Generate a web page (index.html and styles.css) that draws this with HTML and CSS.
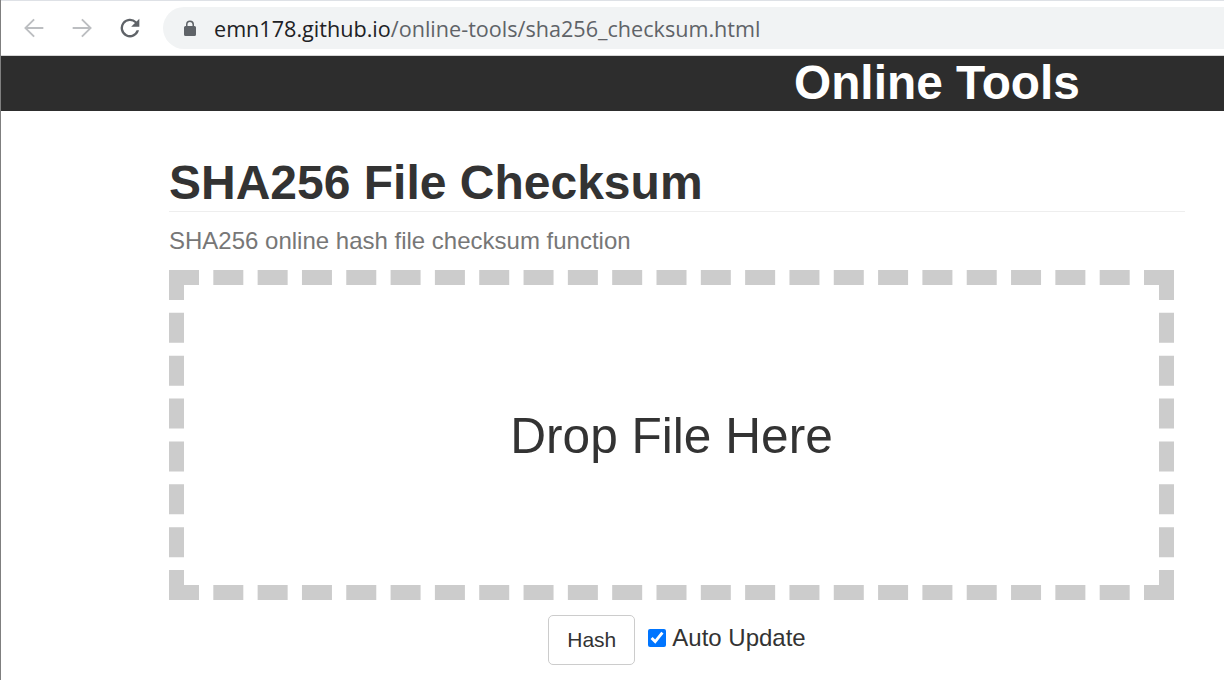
FILE: index.html
```html
<!DOCTYPE html>
<html lang="en">
<head>
<meta charset="utf-8">
<title>SHA256 File Checksum</title>
<link rel="stylesheet" href="styles.css">
</head>
<body>
<div class="toolbar">
  <svg class="nav-icon" viewBox="0 0 24 24" width="28" height="28"><path class="light" d="M20 11.2H6.6l6.1-6.1L11.5 4 3.5 12l8 8 1.2-1.1-6.1-6.1H20z"/></svg>
  <svg class="nav-icon" viewBox="0 0 24 24" width="28" height="28"><path class="light" d="M4 11.2h13.4l-6.1-6.1L12.5 4l8 8-8 8-1.2-1.1 6.1-6.1H4z"/></svg>
  <svg class="nav-icon" viewBox="0 0 24 24" width="28" height="28"><path class="dark" d="M17.65 6.35A8 8 0 1 0 19.73 14h-2.08a6 6 0 1 1-1.41-6.24L13 11h7V4z"/></svg>
  <div class="omnibox">
    <svg class="lock" viewBox="0 0 14 18" width="14" height="18"><path d="M11.5 7H11V5.500a4 4 0 0 0-8 0V7h-.5A1.500 1.500 0 0 0 1 8.500v7A1.500 1.500 0 0 0 2.500 17h9a1.500 1.500 0 0 0 1.500-1.500v-7A1.500 1.500 0 0 0 11.500 7zM4.500 5.500a2.500 2.500 0 0 1 5 0V7h-5z"/></svg>
    <span class="url"><span class="host">emn178.github.io</span>/online-tools/sha256_checksum.html</span>
  </div>
</div>
<header class="site-header"><span class="site-title">Online Tools</span></header>
<main class="content">
  <h1 class="page-title">SHA256 File Checksum</h1>
  <p class="subtitle">SHA256 online hash file checksum function</p>
  <div class="dropzone">Drop File Here</div>
  <div class="actions">
    <button class="hash-btn" type="button">Hash</button>
    <label class="auto"><input class="auto-check" type="checkbox" checked> Auto Update</label>
  </div>
</main>
</body>
</html>
```
FILE: styles.css
```css
* { box-sizing: border-box; }
html, body { margin: 0; height: 100%; overflow: hidden; }
body {
  background: #fff;
  border-left: 1px solid #7f7f7f;
  font-family: "Liberation Sans", Arial, sans-serif;
  color: #333;
}
.toolbar {
  height: 56px;
  border-top: 1px solid #dee1e6;
  border-bottom: 1px solid #d6d6d6;
  display: flex;
  align-items: center;
  padding: 0 0 0 19px;
  gap: 20px;
  background: #fff;
}
.nav-icon { flex: none; }
.light { fill: #bcbec1; }
.dark { fill: #5f6368; }
.omnibox {
  flex: 1;
  margin-left: -1px;
  height: 42px;
  margin-right: -40px;
  border-radius: 21px;
  background: #f1f3f4;
  display: flex;
  align-items: center;
  padding-left: 20px;
  gap: 17px;
}
.lock { fill: #5f6368; flex: none; }
.url { font-family: "Open Sans", sans-serif; font-size: 21.6px; color: #5f6368; white-space: nowrap; }
.host { color: #202124; }
.site-header {
  height: 55px;
  background: #2d2d2d;
  padding-left: 793px;
  line-height: 53px;
}
.site-title { color: #fff; font-size: 47.8px; font-weight: bold; }
.content { padding: 0 0 0 168px; width: 1184px; }
.page-title {
  margin: 42px 0 0;
  padding-top: 2px;
  font-size: 48px;
  line-height: 56px;
  font-weight: bold;
  color: #333;
  border-bottom: 1px solid #eee;
}
.subtitle {
  margin: 16px 0 0;
  font-size: 24px;
  line-height: 26px;
  color: #777;
}
.dropzone {
  margin-top: 16px;
  padding-top: 2px;
  width: 1005px;
  height: 330px;
  border: 15px dashed #ccc;
  display: flex;
  align-items: center;
  justify-content: center;
  font-size: 49.6px;
  color: #333;
}
.actions {
  margin-top: 15px;
  display: flex;
  justify-content: center;
  align-items: flex-start;
  gap: 13px;
}
.hash-btn {
  width: 87px;
  height: 50px;
  background: #fff;
  border: 1px solid #ccc;
  border-radius: 5px;
  font-family: inherit;
  font-size: 21px;
  color: #333;
}
.auto { font-size: 24px; line-height: 46px; color: #333; display: flex; align-items: center; gap: 6px; }
.auto-check { margin: 0; width: 18px; height: 18px; accent-color: #0075ff; }
```
